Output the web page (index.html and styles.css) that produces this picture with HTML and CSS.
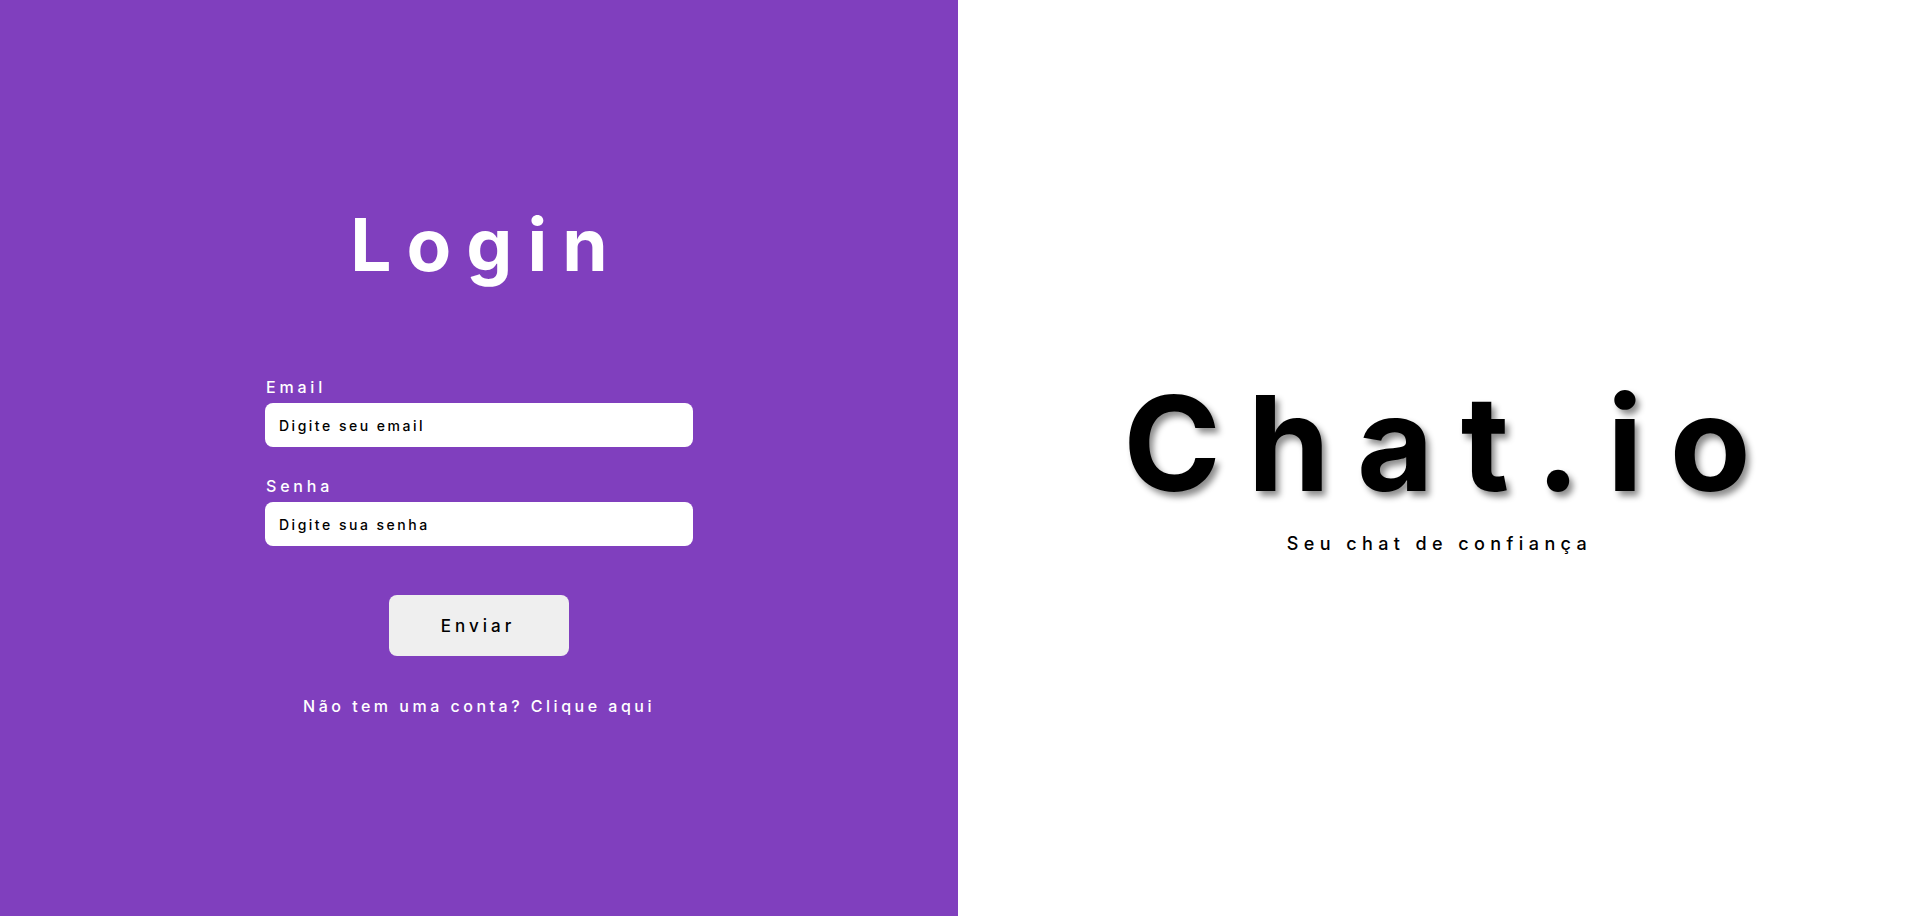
FILE: index.html
```html
<!DOCTYPE html>
<html lang="pt-BR">
<head>
<meta charset="utf-8">
<title>Chat.io - Login</title>
<link rel="stylesheet" href="styles.css">
</head>
<body>
<main class="page">
  <section class="left">
    <div class="login-box">
      <h1 class="login-title">Login</h1>
      <form class="form">
        <label class="field">
          <span class="label">Email</span>
          <input class="input" type="email" placeholder="Digite seu email">
        </label>
        <label class="field">
          <span class="label">Senha</span>
          <input class="input" type="password" placeholder="Digite sua senha">
        </label>
        <button class="btn" type="button">Enviar</button>
      </form>
      <p class="signup">Não tem uma conta? Clique aqui</p>
    </div>
  </section>
  <section class="right">
    <div class="brand">
      <h2 class="brand-title">Chat.io</h2>
      <p class="brand-sub">Seu chat de confiança</p>
    </div>
  </section>
</main>
</body>
</html>
```

FILE: styles.css
```css
* { box-sizing: border-box; }
html, body { margin: 0; padding: 0; height: 100%; }
body {
  font-family: "Inter", "Liberation Sans", sans-serif;
  background: #fff;
}
.page {
  display: flex;
  width: 100%;
  height: 916px;
}
.left {
  width: 50%;
  background: #803fbe;
  display: flex;
  justify-content: center;
}
.login-box {
  display: flex;
  flex-direction: column;
  align-items: center;
  padding-top: 200px;
}
.login-title {
  margin: 0;
  color: #fff;
  font-family: "Inter", sans-serif;
  font-weight: 700;
  font-size: 73px;
  line-height: 90px;
  letter-spacing: 15px;
  margin-right: -15px;
}
.form {
  width: 428px;
  margin-top: 87px;
  display: flex;
  flex-direction: column;
}
.field {
  display: flex;
  flex-direction: column;
  margin-bottom: 29px;
}
.label {
  color: #fff;
  font-size: 16px;
  font-weight: 500;
  line-height: 20px;
  letter-spacing: 3.8px;
  padding-left: 1px;
  margin-bottom: 6px;
}
.input {
  height: 44px;
  border: none;
  border-radius: 8px;
  background: #fff;
  padding: 0 14px;
  font-family: "Inter", sans-serif;
  font-size: 14px;
  font-weight: 500;
  letter-spacing: 2.5px;
  color: #000;
  outline: none;
}
.input::placeholder { color: #000; opacity: 1; }
.btn {
  align-self: center;
  width: 180px;
  height: 61px;
  margin-top: 20px;
  border: none;
  border-radius: 8px;
  background: #efefef;
  font-family: "Inter", sans-serif;
  font-size: 17px;
  font-weight: 500;
  letter-spacing: 4px;
  padding-left: 4px;
  color: #000;
}
.signup {
  margin: 40px 0 0;
  color: #fff;
  font-size: 16px;
  font-weight: 500;
  line-height: 20px;
  letter-spacing: 3.5px;
}
.right {
  width: 50%;
  display: flex;
  justify-content: center;
}
.brand {
  display: flex;
  flex-direction: column;
  align-items: center;
  padding-top: 368px;
}
.brand-title {
  margin: 0;
  font-family: "Inter", sans-serif;
  font-weight: 700;
  font-size: 132px;
  line-height: 150px;
  letter-spacing: 27px;
  margin-right: -27px;
  color: #000;
  text-shadow: 4px 5px 6px rgba(0,0,0,0.45);
}
.brand-sub {
  margin: 15px 0 0;
  font-size: 18px;
  font-weight: 500;
  line-height: 22px;
  letter-spacing: 5.4px;
  margin-right: -5px;
  color: #000;
}
```
